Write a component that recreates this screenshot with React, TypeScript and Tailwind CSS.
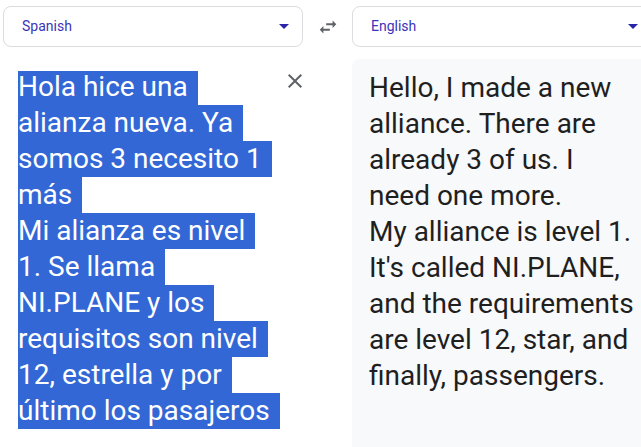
import React from "react";

const leftLines = [
  "Hola hice una",
  "alianza nueva. Ya",
  "somos 3 necesito 1",
  "más",
  "Mi alianza es nivel",
  "1. Se llama",
  "NI.PLANE y los",
  "requisitos son nivel",
  "12, estrella y por",
  "último los pasajeros",
];

function Caret() {
  return (
    <svg width="10" height="5" viewBox="0 0 10 5" className="shrink-0">
      <path d="M0 0 L5 5 L10 0 Z" fill="#2a24a8" />
    </svg>
  );
}

function LangSelect({ label }: { label: string }) {
  return (
    <div className="flex h-[41px] w-[300px] shrink-0 items-center justify-between rounded-[8px] border border-[#dadce0] bg-white pl-[18px] pr-[13px]">
      <span className="text-[14px] text-[#3b34b8]">{label}</span>
      <Caret />
    </div>
  );
}

export default function App() {
  return (
    <div
      className="h-[447px] w-[641px] overflow-hidden bg-white"
      style={{ fontFamily: "Roboto, 'Noto Sans', sans-serif" }}
    >
      <div className="flex items-center pl-[3px] pt-[6px]">
        <LangSelect label="Spanish" />
        <div className="flex w-[49px] shrink-0 items-center justify-center">
          <svg width="22" height="22" viewBox="0 0 24 24">
            <path
              d="M6.99 11L3 15l3.99 4v-3H14v-2H6.99v-3zM21 9l-3.99-4v3H10v2h7.01v3L21 9z"
              fill="#5f6368"
            />
          </svg>
        </div>
        <LangSelect label="English" />
      </div>
      <div className="mt-[12px] flex">
        <div className="flex w-[352px] shrink-0 items-start justify-between pl-[18px] pr-[45px] pt-[10px]">
          <div className="text-[28px] text-white">
            {leftLines.map((l, i) => (
              <div
                key={i}
                className={
                  i === 0
                    ? "mt-[2px] h-[34px] w-fit whitespace-pre bg-[#3367d6] pr-[3px] leading-[32px]"
                    : "h-[36px] w-fit whitespace-pre bg-[#3367d6] pr-[3px] leading-[36px]"
                }
              >
                {l + " "}
              </div>
            ))}
          </div>
          <svg width="24" height="24" viewBox="0 0 24 24" className="shrink-0">
            <path
              d="M19 6.41L17.59 5 12 10.59 6.41 5 5 6.41 10.59 12 5 17.59 6.41 19 12 13.41 17.59 19 19 17.59 13.41 12z"
              fill="#5f6368"
            />
          </svg>
        </div>
        <div className="h-[400px] w-[300px] shrink-0 rounded-tl-[8px] bg-[#f8f9fa] pl-[17px] pr-[12px] pt-[11px] text-[28px] leading-[36px] text-[#1f1f1f]">
          <div>Hello, I made a new alliance. There are already 3 of us. I need one more.</div>
          <div>My alliance is level 1. It's called NI.PLANE, and the requirements are level 12, star, and finally, passengers.</div>
        </div>
      </div>
    </div>
  );
}
